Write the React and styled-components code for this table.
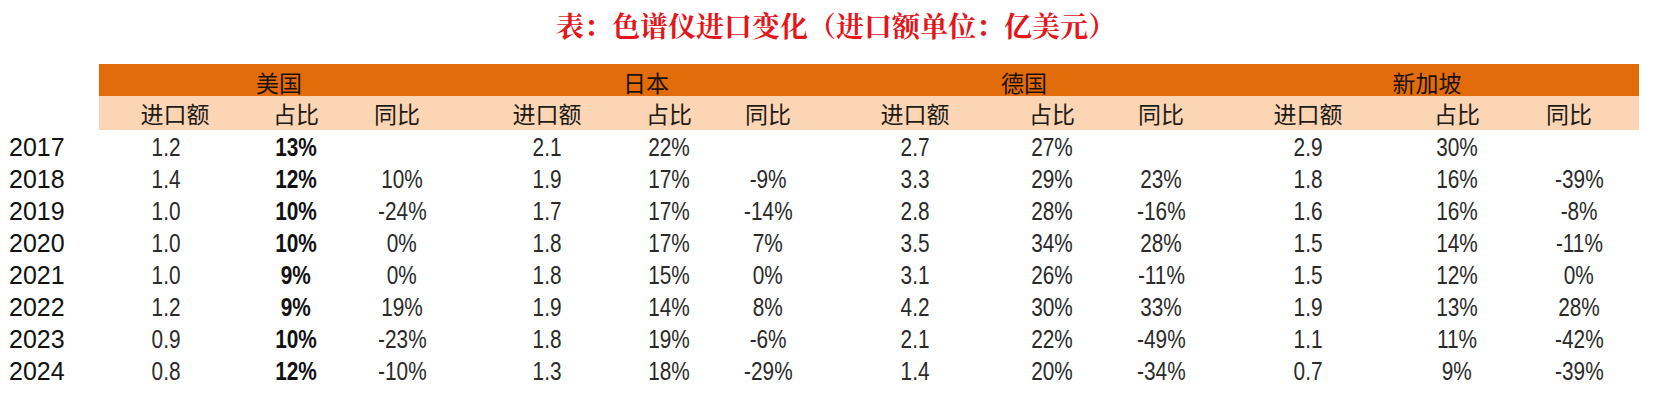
import React from 'react';
import styled, { createGlobalStyle } from 'styled-components';

const GlobalStyle = createGlobalStyle`
    html, body {
        margin: 0;
        padding: 0;
        background: #fff;
    }
`

const Page = styled.div`
    width: 1655px;
    height: 409px;
    background: #fff;
    overflow: hidden;
`

const Title = styled.h1`
    margin: 0 0 14px 0;
    padding-left: 17px;
    height: 50px;
    line-height: 50px;
    text-align: center;
    font-family: "Noto Serif CJK SC", "Noto Sans CJK SC", serif;
    font-size: 28px;
    font-weight: 700;
    color: #e3161c;
`

const Grid = styled.div`
    display: grid;
    grid-template-columns: 99px 152px 90px 118px 176px 68px 130px 164px 110px 108px 186px 112px 126px;
    grid-template-rows: 32px 34px repeat(8, 32px);
`

// shift the centred text without moving the cell itself
const offset = p => {
    const s = p.$shift || 0;
    if (s < 0) return `padding-right: ${-2 * s}px;`;
    if (s > 0) return `padding-left: ${2 * s}px;`;
    return '';
}

const Group = styled.div`
    grid-column: span 3;
    background: #e26b0a;
    display: flex;
    align-items: center;
    justify-content: center;
    padding-top: 4px;
    box-sizing: border-box;
    font-family: "Noto Sans CJK SC", sans-serif;
    font-size: 23px;
    color: #1c1208;
`

const SubHead = styled.div`
    background: #fcd5b4;
    display: flex;
    align-items: center;
    justify-content: center;
    box-sizing: border-box;
    font-family: "Noto Sans CJK SC", sans-serif;
    font-size: 23px;
    color: #1e1a16;
    white-space: nowrap;
    ${offset}
`

const Blank = styled.div``

const Year = styled.div`
    display: flex;
    align-items: center;
    padding: 3px 0 0 9px;
    font-family: "Liberation Sans", Arial, sans-serif;
    font-size: 25px;
    color: #111;
`

const Cell = styled.div`
    display: flex;
    align-items: center;
    justify-content: center;
    box-sizing: border-box;
    padding-top: 3px;
    white-space: nowrap;
    ${offset}
`

// the sheet uses a narrow face; Liberation Sans squeezed to match its widths
const Num = styled.span`
    display: inline-block;
    transform: scaleX(0.8);
    font-family: "Liberation Sans", Arial, sans-serif;
    font-size: 26px;
    font-weight: ${p => (p.$bold ? 700 : 400)};
    color: ${p => (p.$bold ? '#111' : '#2a2a2a')};
`

const groups = ['美国', '日本', '德国', '新加坡'];
const subs = ['进口额', '占比', '同比'];

// per column offsets (header / data) measured from the sheet
const headShift = [0, 0, -3, 0, 0, 0, 0, 0, 0, 0, 0, -7];
const dataShift = [-9, 0, 2, 0, 0, 0, 0, 0, 0, 0, 0, 3];

const rows = [
    ['2017', '1.2', '13%', '', '2.1', '22%', '', '2.7', '27%', '', '2.9', '30%', ''],
    ['2018', '1.4', '12%', '10%', '1.9', '17%', '-9%', '3.3', '29%', '23%', '1.8', '16%', '-39%'],
    ['2019', '1.0', '10%', '-24%', '1.7', '17%', '-14%', '2.8', '28%', '-16%', '1.6', '16%', '-8%'],
    ['2020', '1.0', '10%', '0%', '1.8', '17%', '7%', '3.5', '34%', '28%', '1.5', '14%', '-11%'],
    ['2021', '1.0', '9%', '0%', '1.8', '15%', '0%', '3.1', '26%', '-11%', '1.5', '12%', '0%'],
    ['2022', '1.2', '9%', '19%', '1.9', '14%', '8%', '4.2', '30%', '33%', '1.9', '13%', '28%'],
    ['2023', '0.9', '10%', '-23%', '1.8', '19%', '-6%', '2.1', '22%', '-49%', '1.1', '11%', '-42%'],
    ['2024', '0.8', '12%', '-10%', '1.3', '18%', '-29%', '1.4', '20%', '-34%', '0.7', '9%', '-39%'],
];

const App = () => {
    return (
        <Page>
            <GlobalStyle />
            <Title>表：色谱仪进口变化（进口额单位：亿美元）</Title>
            <Grid>
                <Blank />
                {groups.map(g => <Group key={g}>{g}</Group>)}

                <Blank />
                {groups.flatMap(g => subs).map((s, i) => (
                    <SubHead key={i} $shift={headShift[i]}>{s}</SubHead>
                ))}

                {rows.map(r => (
                    <React.Fragment key={r[0]}>
                        <Year>{r[0]}</Year>
                        {r.slice(1).map((v, i) => (
                            <Cell key={i} $shift={dataShift[i]}>
                                {v && <Num $bold={i === 1}>{v}</Num>}
                            </Cell>
                        ))}
                    </React.Fragment>
                ))}
            </Grid>
        </Page>
    );
};

export default App;
